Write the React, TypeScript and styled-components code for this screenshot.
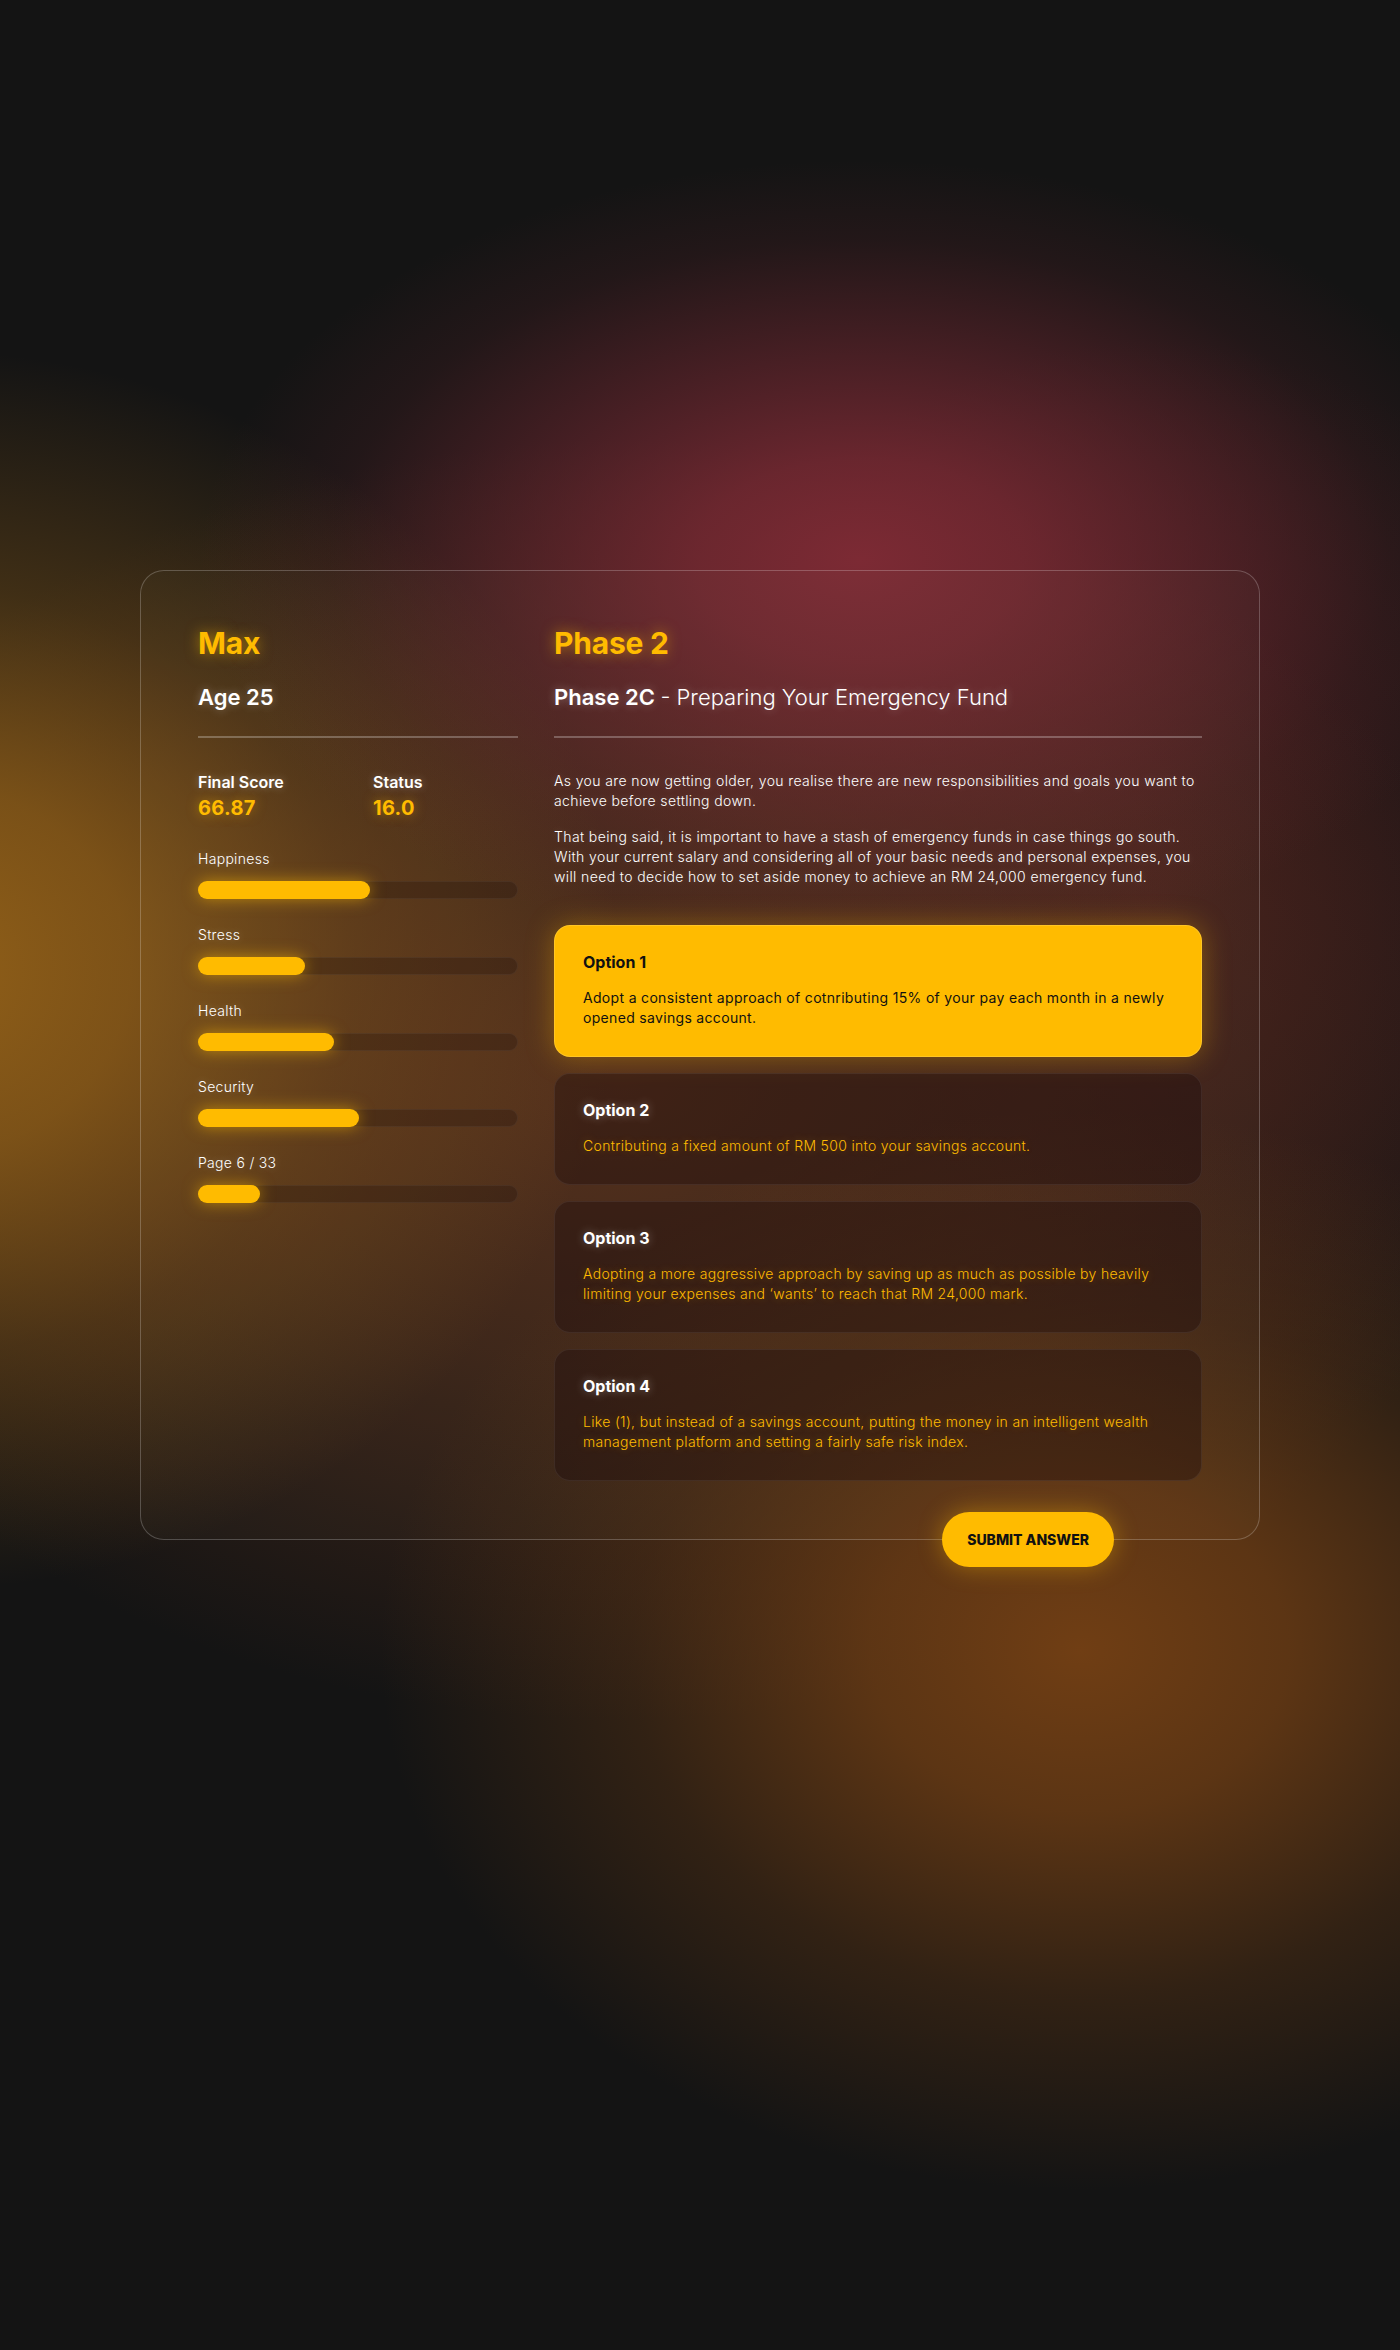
import React from "react";
import styled, { createGlobalStyle } from "styled-components";

const GlobalStyle = createGlobalStyle`
  html, body {
    margin: 0;
    padding: 0;
    background: #141414;
  }
  * { box-sizing: border-box; }
  body {
    font-family: Inter, "Open Sans", "Liberation Sans", sans-serif;
    color: #ffffff;
  }
`;

const AMBER = "#FFBB00";

const Page = styled.div`
  min-height: 2350px;
  padding-top: 570px;
  display: flex;
  justify-content: center;
  align-items: flex-start;
  background-color: #141414;
  background-image:
    radial-gradient(ellipse 660px 400px at 860px 560px,
      rgba(124, 42, 52, 1) 0%,
      rgba(124, 42, 52, 0.82) 25%,
      rgba(124, 42, 52, 0.45) 55%,
      rgba(124, 42, 52, 0.14) 80%,
      rgba(124, 42, 52, 0) 100%),
    radial-gradient(ellipse 700px 620px at -80px 970px,
      rgba(146, 96, 24, 1) 0%,
      rgba(146, 96, 24, 0.78) 30%,
      rgba(146, 96, 24, 0.35) 62%,
      rgba(146, 96, 24, 0) 100%),
    radial-gradient(ellipse 700px 540px at 1080px 1650px,
      rgba(112, 62, 20, 1) 0%,
      rgba(112, 62, 20, 0.78) 30%,
      rgba(112, 62, 20, 0.32) 64%,
      rgba(112, 62, 20, 0) 100%),
    radial-gradient(ellipse 900px 640px at 620px 1080px,
      rgba(86, 46, 26, 0.95) 0%,
      rgba(86, 46, 26, 0.6) 45%,
      rgba(86, 46, 26, 0) 100%),
    radial-gradient(ellipse 520px 560px at 1150px 900px,
      rgba(70, 30, 30, 0.9) 0%,
      rgba(70, 30, 30, 0) 100%);
  background-repeat: no-repeat;
`;

const Card = styled.section`
  width: 1120px;
  border: 1px solid rgba(255, 255, 255, 0.22);
  border-radius: 24px;
  padding: 50px 57px 0;
  display: grid;
  grid-template-columns: 320px 1fr;
  column-gap: 36px;
  background: rgba(255, 235, 220, 0.02);
`;

const Column = styled.div`
  display: flex;
  flex-direction: column;
  min-width: 0;
`;

const BigTitle = styled.h1`
  margin: 0;
  font-size: 30px;
  line-height: 45px;
  font-weight: 700;
  color: ${AMBER};
  letter-spacing: -0.2px;
  text-shadow: 0 0 14px rgba(255, 187, 0, 0.55);
`;

const SubTitle = styled.h2`
  margin: 15px 0 0;
  font-size: 22px;
  line-height: 33px;
  font-weight: 600;
  color: #ffffff;
  text-shadow: 0 0 10px rgba(255, 255, 255, 0.3);
`;

const Light = styled.span`
  font-weight: 300;
`;

const Divider = styled.hr`
  margin: 22px 0 0;
  border: none;
  height: 2px;
  background: rgba(255, 255, 255, 0.26);
`;

const StatsGrid = styled.div`
  margin-top: 32px;
  display: grid;
  grid-template-columns: 175px 1fr;
`;

const Stat = styled.div`
  display: flex;
  flex-direction: column;
`;

const StatLabel = styled.span`
  font-size: 16px;
  line-height: 24px;
  font-weight: 600;
  color: #ffffff;
  text-shadow: 0 0 8px rgba(255, 255, 255, 0.3);
`;

const StatValue = styled.span`
  font-size: 20px;
  line-height: 28px;
  font-weight: 700;
  letter-spacing: 0.3px;
  color: ${AMBER};
  text-shadow: 0 0 12px rgba(255, 187, 0, 0.5);
`;

const Meters = styled.div`
  margin-top: 26px;
  display: flex;
  flex-direction: column;
  gap: 25px;
`;

const Meter = styled.div`
  display: flex;
  flex-direction: column;
  gap: 12px;
`;

const MeterLabel = styled.span`
  font-size: 14px;
  line-height: 21px;
  font-weight: 300;
  letter-spacing: 0.3px;
  color: #ffffff;
  text-shadow: 0 0 8px rgba(255, 255, 255, 0.25);
`;

const Track = styled.div`
  height: 18px;
  border-radius: 9px;
  background: rgba(20, 10, 8, 0.24);
  border: 1px solid rgba(255, 255, 255, 0.05);
  display: flex;
`;

const Fill = styled.div`
  height: 18px;
  margin: -1px 0 0 -1px;
  border-radius: 9px;
  background: ${AMBER};
  box-shadow: 0 0 16px rgba(255, 187, 0, 0.55);
`;

const Paragraph = styled.p<{ $first?: boolean }>`
  margin: ${(p) => (p.$first ? "33px" : "16px")} 0 0;
  font-size: 14px;
  line-height: 20px;
  font-weight: 300;
  letter-spacing: 0.38px;
  color: #ffffff;
  text-shadow: 0 0 8px rgba(255, 255, 255, 0.2);
`;

const Options = styled.div`
  margin-top: 38px;
  display: flex;
  flex-direction: column;
  gap: 16px;
`;

const OptionCard = styled.button<{ $selected?: boolean }>`
  all: unset;
  display: flex;
  flex-direction: column;
  gap: 14px;
  padding: 24px 28px 28px;
  border-radius: 16px;
  cursor: pointer;
  font-family: inherit;
  border: 1px solid
    ${(p) => (p.$selected ? "rgba(255, 200, 40, 0.9)" : "rgba(255, 255, 255, 0.07)")};
  background: ${(p) => (p.$selected ? AMBER : "rgba(26, 8, 10, 0.36)")};
  box-shadow: ${(p) =>
    p.$selected ? "0 0 28px rgba(255, 187, 0, 0.35)" : "none"};
`;

const OptionTitle = styled.span<{ $selected?: boolean }>`
  font-size: 16px;
  line-height: 24px;
  font-weight: 700;
  color: ${(p) => (p.$selected ? "#111111" : "#ffffff")};
  text-shadow: ${(p) => (p.$selected ? "none" : "0 0 10px rgba(255,255,255,0.35)")};
`;

const OptionText = styled.span<{ $selected?: boolean }>`
  font-size: 14px;
  line-height: 20px;
  letter-spacing: 0.32px;
  font-weight: ${(p) => (p.$selected ? 400 : 300)};
  color: ${(p) => (p.$selected ? "#111111" : AMBER)};
  text-shadow: ${(p) => (p.$selected ? "none" : "0 0 8px rgba(255,187,0,0.3)")};
`;

const ButtonRow = styled.div`
  margin: 31px 0 -28px;
  padding-right: 88px;
  display: flex;
  justify-content: flex-end;
`;

const SubmitButton = styled.button`
  height: 55px;
  padding: 0 25px;
  border: none;
  border-radius: 28px;
  background: ${AMBER};
  color: #111111;
  font-family: inherit;
  font-size: 14px;
  font-weight: 800;
  text-transform: uppercase;
  cursor: pointer;
  box-shadow: 0 0 24px rgba(255, 187, 0, 0.4);
`;

type MeterData = { label: string; value: number };

const meters: MeterData[] = [
  { label: "Happiness", value: 54 },
  { label: "Stress", value: 33.5 },
  { label: "Health", value: 42.7 },
  { label: "Security", value: 50.7 },
  { label: "Page 6 / 33", value: 19.5 },
];

const options = [
  {
    title: "Option 1",
    text: "Adopt a consistent approach of cotnributing 15% of your pay each month in a newly opened savings account.",
  },
  {
    title: "Option 2",
    text: "Contributing a fixed amount of RM 500 into your savings account.",
  },
  {
    title: "Option 3",
    text: "Adopting a more aggressive approach by saving up as much as possible by heavily limiting your expenses and \u2018wants\u2019 to reach that RM 24,000 mark.",
  },
  {
    title: "Option 4",
    text: "Like (1), but instead of a savings account, putting the money in an intelligent wealth management platform and setting a fairly safe risk index.",
  },
];

export default function App() {
  const [selected, setSelected] = React.useState(0);
  return (
    <>
      <GlobalStyle />
      <Page>
        <Card>
          <Column>
            <BigTitle>Max</BigTitle>
            <SubTitle>Age 25</SubTitle>
            <Divider />
            <StatsGrid>
              <Stat>
                <StatLabel>Final Score</StatLabel>
                <StatValue>66.87</StatValue>
              </Stat>
              <Stat>
                <StatLabel>Status</StatLabel>
                <StatValue>16.0</StatValue>
              </Stat>
            </StatsGrid>
            <Meters>
              {meters.map((m) => (
                <Meter key={m.label}>
                  <MeterLabel>{m.label}</MeterLabel>
                  <Track>
                    <Fill style={{ width: `${m.value}%` }} />
                  </Track>
                </Meter>
              ))}
            </Meters>
          </Column>
          <Column>
            <BigTitle>Phase 2</BigTitle>
            <SubTitle>
              Phase 2C <Light>- Preparing Your Emergency Fund</Light>
            </SubTitle>
            <Divider />
            <Paragraph $first>
              As you are now getting older, you realise there are new responsibilities and goals you
              want to achieve before settling down.
            </Paragraph>
            <Paragraph>
              That being said, it is important to have a stash of emergency funds in case things go
              south. With your current salary and considering all of your basic needs and personal
              expenses, you will need to decide how to set aside money to achieve an RM 24,000
              emergency fund.
            </Paragraph>
            <Options>
              {options.map((o, i) => (
                <OptionCard
                  key={o.title}
                  $selected={i === selected}
                  onClick={() => setSelected(i)}
                >
                  <OptionTitle $selected={i === selected}>{o.title}</OptionTitle>
                  <OptionText $selected={i === selected}>{o.text}</OptionText>
                </OptionCard>
              ))}
            </Options>
            <ButtonRow>
              <SubmitButton>Submit Answer</SubmitButton>
            </ButtonRow>
          </Column>
        </Card>
      </Page>
    </>
  );
}
